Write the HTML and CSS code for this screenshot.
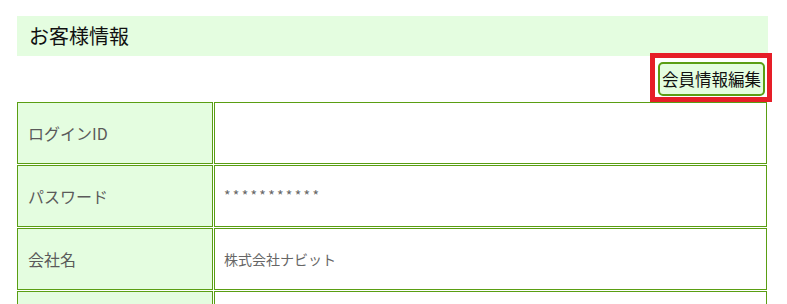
FILE: index.html
```html
<!DOCTYPE html>
<html lang="ja">
<head>
<meta charset="utf-8">
<title>お客様情報</title>
<link rel="stylesheet" href="styles.css">
</head>
<body>
<div class="page">
  <h2 class="title">お客様情報</h2>
  <div class="actions">
    <button class="btn" type="button">会員情報編集</button>
  </div>
  <table class="info">
    <tr><th>ログインID</th><td></td></tr>
    <tr><th>パスワード</th><td class="mask">***********</td></tr>
    <tr><th>会社名</th><td>株式会社ナビット</td></tr>
    <tr><th></th><td></td></tr>
  </table>
</div>
</body>
</html>
```
FILE: styles.css
```css
html, body {
  margin: 0;
  padding: 0;
  background: #fff;
}
.page {
  padding: 16px 19px 0 17px;
  font-family: "Noto Sans CJK JP", "Noto Sans", sans-serif;
}
.title {
  margin: 0;
  height: 40px;
  line-height: 40px;
  padding-left: 12px;
  background: #e4fde0;
  font-size: 20px;
  font-weight: normal;
  color: #111;
}
.actions {
  display: flex;
  justify-content: flex-end;
  padding: 6px 3px 5px 0;
}
.btn {
  position: relative;
  height: 34px;
  padding: 0 2px;
  border: 2px solid #5a9e13;
  border-radius: 5px;
  background: #e4fde0;
  color: #111;
  font-family: "Noto Sans CJK JP", sans-serif;
  font-size: 16.5px;
  line-height: 28px;
}
.btn::after {
  content: "";
  position: absolute;
  top: -11px;
  left: -10px;
  right: -9px;
  bottom: -8px;
  border: 5px solid #e61e28;
  pointer-events: none;
}
.info {
  width: calc(100% + 1px);
  margin-left: -1px;
  border-collapse: separate;
  border-spacing: 1px;
}
.info th,
.info td {
  box-sizing: border-box;
  height: 62px;
  border: 1px solid #5a9e13;
  vertical-align: middle;
  text-align: left;
  font-weight: normal;
}
.info th {
  width: 196px;
  padding: 0 10px;
  background: #e4fde0;
  color: #5a5a5a;
  font-size: 16px;
}
.info td {
  padding: 0 9px;
  color: #666;
  font-size: 14px;
}
.info td.mask {
  letter-spacing: 2.3px;
  padding-bottom: 3px;
}
```
